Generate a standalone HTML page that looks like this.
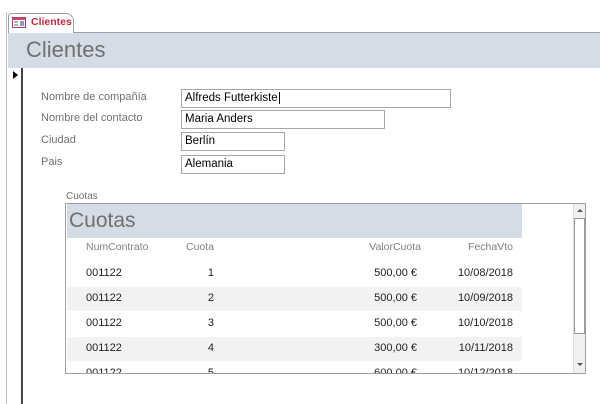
<!DOCTYPE html>
<html><head><meta charset="utf-8"><style>
*{margin:0;padding:0;box-sizing:border-box}
body{width:600px;height:404px;background:#fff;position:relative;overflow:hidden;font-family:"Liberation Sans",sans-serif;}
.a{position:absolute}
.lbl{font-size:11px;color:#707070}
.tb{border:1px solid #a6a6a6;background:#fff;font-size:11.5px;color:#000;padding:2px 0 0 3px;height:19px}
.hd{font-size:10.5px;color:#7f7f7f}
.v{font-size:11px;color:#222}
</style></head><body>
<div class="a" style="left:0;top:0;width:600px;height:12px;background:#fff"></div>
<div class="a" style="left:6px;top:12px;width:1px;height:392px;background:#bbb"></div>
<div class="a" style="left:8px;top:32px;width:592px;height:1px;background:#a0a0a0"></div>
<!-- tab -->
<div class="a" style="left:8px;top:13px;width:66px;height:20px;background:#fff;border:1px solid #a0a0a0;border-bottom:none;border-radius:3px 8px 0 0"></div>
<svg class="a" style="left:12px;top:17px" width="14" height="11"><rect x="0.5" y="0.5" width="13" height="10" fill="#fff" stroke="#b04060"/><rect x="1" y="1" width="12" height="2" fill="#c05070"/><line x1="2" y1="5" x2="6" y2="5" stroke="#666"/><line x1="2" y1="8" x2="6" y2="8" stroke="#666"/><rect x="8" y="4" width="4" height="5" fill="#8aa0c0"/></svg>
<div class="a" style="left:31px;top:16px;font-size:10.5px;color:#c0283c;font-weight:bold">Clientes</div>
<!-- header -->
<div class="a" style="left:8px;top:33px;width:592px;height:35px;background:#d6dce5"></div>
<div class="a" style="left:26px;top:37px;font-size:22px;color:#707070">Clientes</div>
<!-- record selector -->
<div class="a" style="left:8px;top:68px;width:15px;height:336px;border-right:2px solid #444"></div>
<div class="a" style="left:13px;top:71px;width:0;height:0;border-left:5px solid #000;border-top:4px solid transparent;border-bottom:4px solid transparent"></div>
<!-- fields -->
<div class="a lbl" style="left:41px;top:91px">Nombre de compañía</div>
<div class="a lbl" style="left:41px;top:112px">Nombre del contacto</div>
<div class="a lbl" style="left:41px;top:134px">Ciudad</div>
<div class="a lbl" style="left:41px;top:156px">Pais</div>
<div class="a tb" style="left:181px;top:89px;width:270px">Alfreds Futterkiste<span style="border-left:1px solid #000;margin-left:1px"></span></div>
<div class="a tb" style="left:181px;top:110px;width:204px">Maria Anders</div>
<div class="a tb" style="left:181px;top:132px;width:104px">Berlín</div>
<div class="a tb" style="left:181px;top:155px;width:104px">Alemania</div>
<!-- subform -->
<div class="a" style="left:66px;top:191px;font-size:10px;color:#707070">Cuotas</div>
<div class="a" style="left:65px;top:203px;width:521px;height:171px;border:1px solid #a0a0a0;overflow:hidden;background:#fff">
 <div class="a" style="left:1px;top:0;width:455px;height:34px;background:#d6dce5"></div>
 <div class="a" style="left:3px;top:5px;font-size:21px;color:#707070">Cuotas</div>
 <div class="a hd" style="left:20px;top:37px">NumContrato</div>
 <div class="a hd" style="left:120px;top:37px">Cuota</div>
 <div class="a hd" style="left:200px;top:37px;width:155px;text-align:right">ValorCuota</div>
 <div class="a hd" style="left:360px;top:37px;width:87px;text-align:right">FechaVto</div>
 <div class="a" style="left:1px;top:83px;width:455px;height:24px;background:#f2f2f2"></div>
 <div class="a" style="left:1px;top:133px;width:455px;height:24px;background:#f2f2f2"></div>
 <div class="a" style="left:0;top:63px;width:460px">
  <div style="position:relative;height:25px" class="v"><span class="a" style="left:20px">001122</span><span class="a" style="left:120px;width:28px;text-align:right">1</span><span class="a" style="left:250px;width:101px;text-align:right">500,00 €</span><span class="a" style="left:360px;width:87px;text-align:right">10/08/2018</span></div>
  <div style="position:relative;height:25px" class="v"><span class="a" style="left:20px">001122</span><span class="a" style="left:120px;width:28px;text-align:right">2</span><span class="a" style="left:250px;width:101px;text-align:right">500,00 €</span><span class="a" style="left:360px;width:87px;text-align:right">10/09/2018</span></div>
  <div style="position:relative;height:25px" class="v"><span class="a" style="left:20px">001122</span><span class="a" style="left:120px;width:28px;text-align:right">3</span><span class="a" style="left:250px;width:101px;text-align:right">500,00 €</span><span class="a" style="left:360px;width:87px;text-align:right">10/10/2018</span></div>
  <div style="position:relative;height:25px" class="v"><span class="a" style="left:20px">001122</span><span class="a" style="left:120px;width:28px;text-align:right">4</span><span class="a" style="left:250px;width:101px;text-align:right">300,00 €</span><span class="a" style="left:360px;width:87px;text-align:right">10/11/2018</span></div>
  <div style="position:relative;height:25px" class="v"><span class="a" style="left:20px">001122</span><span class="a" style="left:120px;width:28px;text-align:right">5</span><span class="a" style="left:250px;width:101px;text-align:right">600,00 €</span><span class="a" style="left:360px;width:87px;text-align:right">10/12/2018</span></div>
 </div>
 <!-- scrollbar -->
 <div class="a" style="left:507px;top:0;width:13px;height:169px;background:#f0f0f0;border-left:1px solid #ddd"></div>
 <div class="a" style="left:508px;top:14px;width:11px;height:116px;background:#fff;border:1px solid #999"></div>
 <div class="a" style="left:511px;top:5px;width:0;height:0;border-bottom:3px solid #555;border-left:3px solid transparent;border-right:3px solid transparent"></div>
 <div class="a" style="left:511px;top:159px;width:0;height:0;border-top:3px solid #555;border-left:3px solid transparent;border-right:3px solid transparent"></div>
</div>
</body></html>
